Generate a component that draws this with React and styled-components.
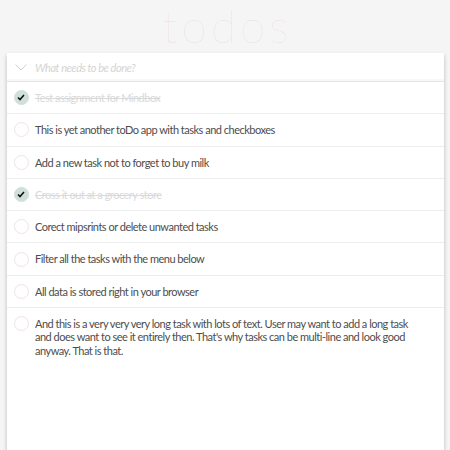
import React from "react";
import styled, { createGlobalStyle } from "styled-components";

const Global = createGlobalStyle`
  html, body { margin: 0; padding: 0; background: #f5f5f5; }
  body { font-family: Lato, "Open Sans", sans-serif; color: #4d4d4d; }
`;

const Page = styled.div`
  display: flex;
  flex-direction: column;
  align-items: center;
  padding: 0 6px 0 7px;
  height: 450px;
  overflow: hidden;
`;

const Title = styled.h1`
  margin: 0 0 2px;
  height: 51px;
  font-family: Lato, sans-serif;
  font-weight: 100;
  font-size: 46px;
  line-height: 51px;
  letter-spacing: 4px;
  padding-left: 4px;
  color: rgba(175, 47, 47, 0.15);
  text-align: center;
`;

const Card = styled.section`
  width: 100%;
  flex: 1;
  background: #fff;
  box-shadow: 0 2px 4px rgba(0, 0, 0, 0.2), 0 4px 6px rgba(0, 0, 0, 0.05);
`;

const Header = styled.div`
  display: flex;
  align-items: center;
  height: 28px;
  border-bottom: 1px solid #e6e6e6;
  box-shadow: inset 0 -2px 1px rgba(0, 0, 0, 0.03);
`;

const Toggle = styled.div`
  width: 28px;
  display: flex;
  justify-content: center;
  padding-top: 1px;
`;

const Placeholder = styled.span`
  font-style: italic;
  font-size: 11px;
  letter-spacing: -0.45px;
  color: #d4d4d4;
`;

const List = styled.ul`
  list-style: none;
  margin: 0;
  padding: 0;
`;

const Item = styled.li`
  display: flex;
  align-items: flex-start;
  padding: 9px 36px 9px 0;
  border-bottom: 1px solid #ededed;
  &:last-child {
    border-bottom: none;
  }
`;

const Check = styled.span`
  flex: none;
  width: 28px;
  height: 13.3px;
  display: flex;
  justify-content: center;
  align-items: center;
`;

const Circle = styled.span`
  width: 15px;
  height: 15px;
  box-sizing: border-box;
  border-radius: 50%;
  border: 1px solid ${(p) => (p.$done ? "#cfe0da" : "#f0e3e3")};
  background: ${(p) => (p.$done ? "#cfe0da" : "#fff")};
  display: flex;
  align-items: center;
  justify-content: center;
`;

const Label = styled.span`
  font-size: 11px;
  line-height: 13.3px;
  letter-spacing: -0.5px;
  color: ${(p) => (p.$done ? "#d9d9d9" : "#4d4d4d")};
  text-decoration: ${(p) => (p.$done ? "line-through" : "none")};
`;

const todos = [
  { text: "Test assignment for Mindbox", done: true },
  { text: "This is yet another toDo app with tasks and checkboxes", done: false },
  { text: "Add a new task not to forget to buy milk", done: false },
  { text: "Cross it out at a grocery store", done: true },
  { text: "Corect mipsrints or delete unwanted tasks", done: false },
  { text: "Filter all the tasks with the menu below", done: false },
  { text: "All data is stored right in your browser", done: false },
  {
    text:
      "And this is a very very very long task with lots of text. User may want to add a long task and does want to see it entirely then. That's why tasks can be multi-line and look good anyway. That is that.",
    done: false,
  },
];

export default function App() {
  return (
    <>
      <Global />
      <Page>
        <Title>todos</Title>
        <Card>
          <Header>
            <Toggle>
              <svg width="12" height="7" viewBox="0 0 12 7" fill="none">
                <path d="M0.5 0.5 L6 6 L11.5 0.5" stroke="#d0d0d0" strokeWidth="1" />
              </svg>
            </Toggle>
            <Placeholder>What needs to be done?</Placeholder>
          </Header>
          <List>
            {todos.map((t, i) => (
              <Item key={i}>
                <Check>
                  <Circle $done={t.done}>
                    {t.done && (
                      <svg width="8" height="7" viewBox="0 0 8 7">
                        <path d="M1 3.5 L3 5.5 L7 1" stroke="#111" strokeWidth="1.6" fill="none" />
                      </svg>
                    )}
                  </Circle>
                </Check>
                <Label $done={t.done}>{t.text}</Label>
              </Item>
            ))}
          </List>
        </Card>
      </Page>
    </>
  );
}
